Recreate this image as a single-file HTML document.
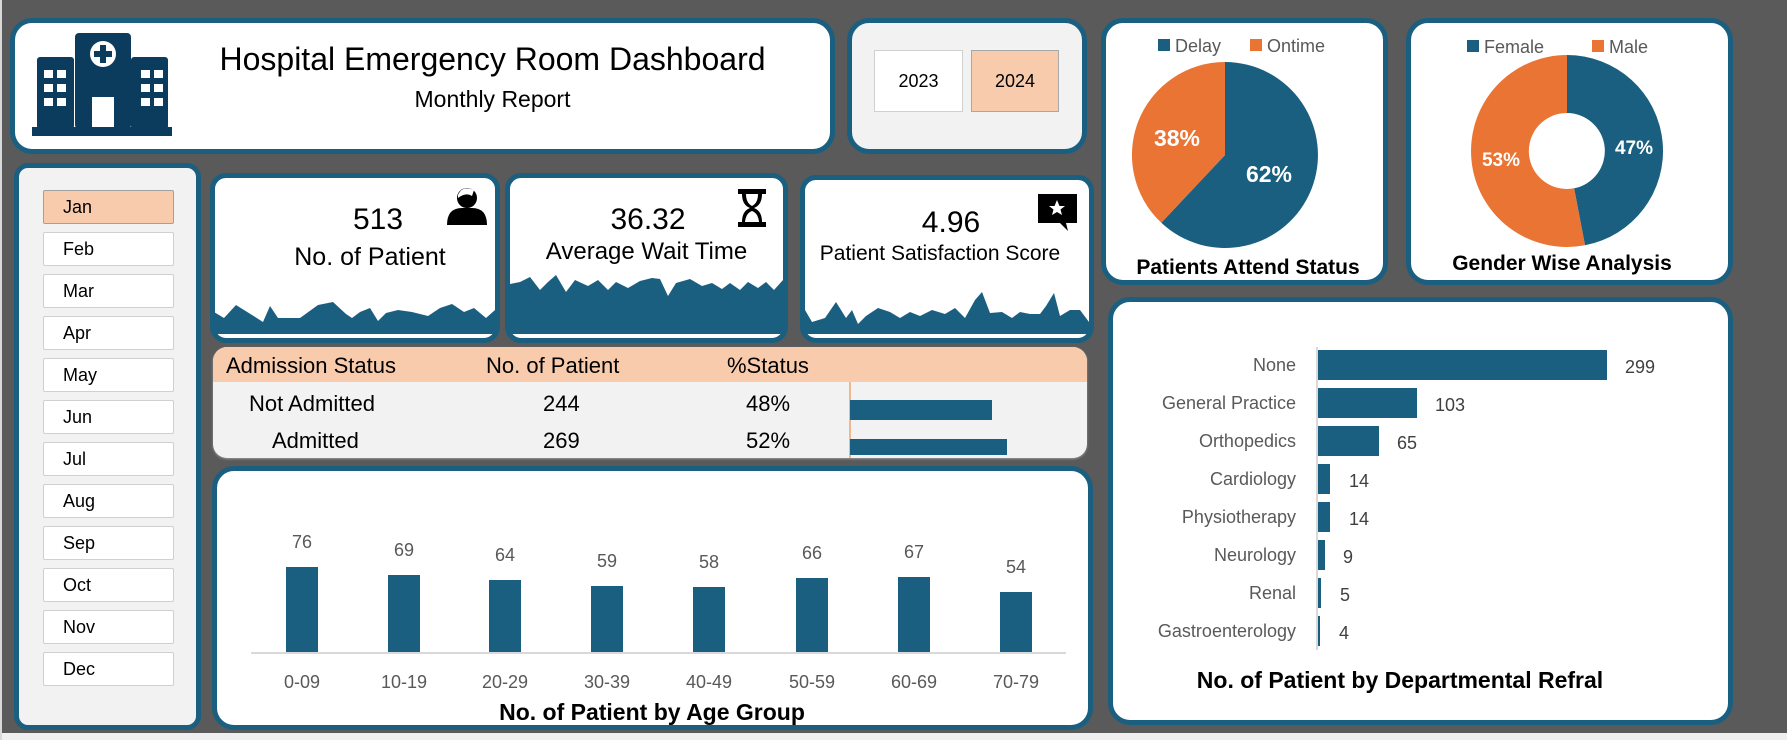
<!DOCTYPE html>
<html><head><meta charset="utf-8"><style>
*{margin:0;padding:0;box-sizing:border-box}
body{width:1787px;height:740px;background:#5a5a5a;position:relative;overflow:hidden;font-family:"Liberation Sans Narrow","Liberation Sans",sans-serif;color:#000}
.p{position:absolute;border:5px solid #1a5f80;background:#fff;border-radius:22px}
.t{position:absolute;white-space:nowrap;line-height:1}
.c{text-align:center}
.btn{position:absolute;left:43px;width:131px;height:34px;background:#fff;border:1px solid #d0d0d0;border-radius:2px;font-size:18px;padding-left:19px;line-height:33px}
svg{position:absolute;left:0;top:0}
</style></head><body>
<div style="position:absolute;left:0;top:733px;width:1787px;height:7px;background:#efefef"></div>
<div style="position:absolute;left:0;top:0;width:2px;height:740px;background:#d8d8d8"></div>

<div class="p" style="left:10px;top:18px;width:825px;height:136px"></div>
<div class="p" style="left:847px;top:18px;width:240px;height:136px;background:#f2f2f2"></div>
<div class="p" style="left:1101px;top:18px;width:287px;height:267px"></div>
<div class="p" style="left:1406px;top:18px;width:327px;height:267px"></div>
<div class="p" style="left:14px;top:163px;width:187px;height:567px;background:#f2f2f2;border-radius:14px"></div>
<div class="p" style="left:210px;top:173px;width:290px;height:170px;border-radius:16px"></div>
<div class="p" style="left:505px;top:173px;width:283px;height:170px;border-radius:16px"></div>
<div class="p" style="left:800px;top:175px;width:294px;height:168px;border-radius:16px"></div>
<div style="position:absolute;left:213px;top:347px;width:874px;height:111px;background:#f2f2f2;border-radius:14px;overflow:hidden;box-shadow:0 1px 2px #999">
<div style="height:35px;background:#f8cbad"></div></div>
<div class="p" style="left:212px;top:466px;width:881px;height:264px"></div>
<div class="p" style="left:1108px;top:297px;width:625px;height:428px"></div>

<div style="position:absolute;left:874px;top:50px;width:89px;height:62px;background:#fff;border:1px solid #d0d0d0;font-size:18px;text-align:center;line-height:60px">2023</div>
<div style="position:absolute;left:971px;top:50px;width:88px;height:62px;background:#f8cbad;border:1px solid #a8a8a8;font-size:18px;text-align:center;line-height:60px">2024</div>

<div class="btn" style="top:190px;background:#f8cbad;border-color:#a0a0a0">Jan</div>
<div class="btn" style="top:232px">Feb</div>
<div class="btn" style="top:274px">Mar</div>
<div class="btn" style="top:316px">Apr</div>
<div class="btn" style="top:358px">May</div>
<div class="btn" style="top:400px">Jun</div>
<div class="btn" style="top:442px">Jul</div>
<div class="btn" style="top:484px">Aug</div>
<div class="btn" style="top:526px">Sep</div>
<div class="btn" style="top:568px">Oct</div>
<div class="btn" style="top:610px">Nov</div>
<div class="btn" style="top:652px">Dec</div>

<div class="t c" style="left:180px;width:625px;top:43px;font-size:32px">Hospital Emergency Room Dashboard</div>
<div class="t c" style="left:180px;width:625px;top:88px;font-size:23px">Monthly Report</div>

<div class="t c" style="left:300px;width:156px;top:205px;font-size:30px">513</div>
<div class="t c" style="left:240px;width:260px;top:245px;font-size:25px">No. of Patient</div>
<div class="t c" style="left:570px;width:156px;top:205px;font-size:30px">36.32</div>
<div class="t c" style="left:505px;width:283px;top:240px;font-size:24px">Average Wait Time</div>
<div class="t c" style="left:873px;width:156px;top:208px;font-size:30px">4.96</div>
<div class="t c" style="left:805px;width:270px;top:243px;font-size:21px">Patient Satisfaction Score</div>

<div class="t" style="left:226px;top:355px;font-size:22px">Admission Status</div>
<div class="t" style="left:486px;top:355px;font-size:22px">No. of Patient</div>
<div class="t" style="left:727px;top:355px;font-size:22px">%Status</div>
<div class="t" style="left:249px;top:393px;font-size:22px">Not Admitted</div>
<div class="t" style="left:272px;top:430px;font-size:22px">Admitted</div>
<div class="t" style="left:543px;top:393px;font-size:22px">244</div>
<div class="t" style="left:543px;top:430px;font-size:22px">269</div>
<div class="t" style="left:746px;top:393px;font-size:22px">48%</div>
<div class="t" style="left:746px;top:430px;font-size:22px">52%</div>

<svg width="1787" height="740" viewBox="0 0 1787 740" font-family="Liberation Sans Narrow, Liberation Sans, sans-serif">
<g fill="#0b3c5d">
<rect x="32" y="127" width="140" height="9"/>
<rect x="37" y="57" width="37" height="72" rx="3"/>
<rect x="131" y="57" width="37" height="72" rx="3"/>
<rect x="75" y="33" width="56" height="96" rx="4"/>
</g>
<g fill="#fff">
<circle cx="103" cy="54" r="13"/>
<rect x="44" y="70" width="9" height="8"/><rect x="57" y="70" width="9" height="8"/>
<rect x="44" y="84" width="9" height="8"/><rect x="57" y="84" width="9" height="8"/>
<rect x="44" y="98" width="9" height="8"/><rect x="57" y="98" width="9" height="8"/>
<rect x="141" y="70" width="9" height="8"/><rect x="154" y="70" width="9" height="8"/>
<rect x="141" y="84" width="9" height="8"/><rect x="154" y="84" width="9" height="8"/>
<rect x="141" y="98" width="9" height="8"/><rect x="154" y="98" width="9" height="8"/>
<rect x="92" y="97" width="22" height="30"/>
</g>
<g fill="#0b3c5d"><rect x="100" y="45" width="6" height="18"/><rect x="94" y="51" width="18" height="6"/></g>

<g fill="#000">
<circle cx="467" cy="198" r="10"/>
<path d="M447 225 Q447 208 462 208 L472 208 Q487 208 487 225 Z"/>
<path d="M458 195 Q462 185 474 190 L472 196 Q466 192 458 198Z" fill="#fff"/>
<path d="M738 189 H766 V194 H762 Q762 205 754 208 Q762 211 762 222 H766 V227 H738 V222 H742 Q742 211 750 208 Q742 205 742 194 H738Z"/>
<path d="M746 194 H758 Q758 203 752 206 Q746 203 746 194Z" fill="#fff"/>
<path d="M745 222 Q746 213 752 211 Q758 213 759 222Z" fill="#fff"/>
<path d="M1038 194 H1077 V223 H1066 L1068 231 L1060 223 H1038Z"/>
<polygon fill="#fff" points="1057,200 1059.5,206 1065,206 1060.5,209.5 1062,215 1057,212 1052,215 1053.5,209.5 1049,206 1054.5,206"/>
</g>

<g fill="#1a5f80">
<polygon points="214,312 224,318 236,305 252,315 263,322 270,306 278,318 300,318 318,305 333,302 346,314 352,318 360,312 370,308 378,321 386,313 398,310 412,312 428,316 440,308 452,304 464,312 474,308 486,318 495,310 495,334 214,334"/>
<polygon points="510,284 520,282 530,277 540,290 548,282 556,275 566,292 575,280 588,286 598,280 608,290 616,282 628,288 640,281 652,278 660,279 668,296 676,283 690,279 702,286 712,283 722,289 730,283 740,290 748,282 758,288 766,282 774,290 783,280 783,334 510,334"/>
<polygon points="805,310 812,322 825,318 836,302 846,318 852,310 858,324 866,316 878,308 890,312 900,318 910,312 920,316 932,310 945,314 955,308 965,318 975,300 982,292 990,313 1002,312 1012,318 1020,312 1030,314 1040,314 1046,306 1054,293 1060,316 1070,310 1080,310 1089,322 1089,334 805,334"/>
</g>

<line x1="850" y1="382" x2="850" y2="458" stroke="#ed7d31" stroke-width="1"/>
<rect x="850" y="400" width="142" height="20" fill="#1a5f80"/>
<rect x="850" y="439" width="157" height="16" fill="#1a5f80"/>

<path d="M1225,155 L1225,62 A93,93 0 1 1 1161.3,222.8 Z" fill="#1a5f80"/>
<path d="M1225,155 L1161.3,222.8 A93,93 0 0 1 1225,62 Z" fill="#ea7434"/>
<text x="1177" y="146" font-size="23" font-weight="bold" fill="#fff" text-anchor="middle">38%</text>
<text x="1269" y="182" font-size="23" font-weight="bold" fill="#fff" text-anchor="middle">62%</text>
<rect x="1158" y="39" width="12" height="12" fill="#1a5f80"/>
<text x="1175" y="52" font-size="18" fill="#595959">Delay</text>
<rect x="1250" y="39" width="12" height="12" fill="#ea7434"/>
<text x="1267" y="52" font-size="18" fill="#595959">Ontime</text>
<text x="1248" y="274" font-size="21" font-weight="bold" text-anchor="middle">Patients Attend Status</text>

<path d="M1567,55 A96,96 0 0 1 1585,245.3 L1574.1,188.3 A38,38 0 0 0 1567,113 Z" fill="#1a5f80"/>
<path d="M1585,245.3 A96,96 0 1 1 1567,55 L1567,113 A38,38 0 1 0 1574.1,188.3 Z" fill="#ea7434"/>
<text x="1634" y="154" font-size="19" font-weight="bold" fill="#fff" text-anchor="middle">47%</text>
<text x="1501" y="166" font-size="19" font-weight="bold" fill="#fff" text-anchor="middle">53%</text>
<rect x="1467" y="40" width="12" height="12" fill="#1a5f80"/>
<text x="1484" y="53" font-size="18" fill="#595959">Female</text>
<rect x="1592" y="40" width="12" height="12" fill="#ea7434"/>
<text x="1609" y="53" font-size="18" fill="#595959">Male</text>
<text x="1562" y="270" font-size="21" font-weight="bold" text-anchor="middle">Gender Wise Analysis</text>

<line x1="251" y1="653" x2="1066" y2="653" stroke="#d9d9d9" stroke-width="2"/>
<g fill="#1a5f80">
<rect x="286" y="567" width="32" height="85"/>
<rect x="388" y="575" width="32" height="77"/>
<rect x="489" y="580" width="32" height="72"/>
<rect x="591" y="586" width="32" height="66"/>
<rect x="693" y="587" width="32" height="65"/>
<rect x="796" y="578" width="32" height="74"/>
<rect x="898" y="577" width="32" height="75"/>
<rect x="1000" y="592" width="32" height="60"/>
</g>
<g font-size="18" fill="#595959" text-anchor="middle">
<text x="302" y="548">76</text><text x="404" y="556">69</text><text x="505" y="561">64</text><text x="607" y="567">59</text>
<text x="709" y="568">58</text><text x="812" y="559">66</text><text x="914" y="558">67</text><text x="1016" y="573">54</text>
<text x="302" y="688">0-09</text><text x="404" y="688">10-19</text><text x="505" y="688">20-29</text><text x="607" y="688">30-39</text>
<text x="709" y="688">40-49</text><text x="812" y="688">50-59</text><text x="914" y="688">60-69</text><text x="1016" y="688">70-79</text>
</g>
<text x="652" y="720" font-size="23" font-weight="bold" text-anchor="middle">No. of Patient by Age Group</text>

<line x1="1317" y1="347" x2="1317" y2="650" stroke="#d9d9d9" stroke-width="2"/>
<g fill="#1a5f80">
<rect x="1318" y="350" width="289" height="30"/>
<rect x="1318" y="388" width="99" height="30"/>
<rect x="1318" y="426" width="61" height="30"/>
<rect x="1318" y="464" width="12" height="30"/>
<rect x="1318" y="502" width="12" height="30"/>
<rect x="1318" y="540" width="7" height="30"/>
<rect x="1318" y="578" width="3" height="30"/>
<rect x="1318" y="616" width="2" height="30"/>
</g>
<g font-size="18" fill="#595959" text-anchor="end">
<text x="1296" y="371">None</text><text x="1296" y="409">General Practice</text><text x="1296" y="447">Orthopedics</text>
<text x="1296" y="485">Cardiology</text><text x="1296" y="523">Physiotherapy</text><text x="1296" y="561">Neurology</text>
<text x="1296" y="599">Renal</text><text x="1296" y="637">Gastroenterology</text>
</g>
<g font-size="18" fill="#404040">
<text x="1625" y="373">299</text><text x="1435" y="411">103</text><text x="1397" y="449">65</text>
<text x="1349" y="487">14</text><text x="1349" y="525">14</text><text x="1343" y="563">9</text>
<text x="1340" y="601">5</text><text x="1339" y="639">4</text>
</g>
<text x="1400" y="688" font-size="23" font-weight="bold" text-anchor="middle">No. of Patient by Departmental Refral</text>
</svg>
</body></html>
